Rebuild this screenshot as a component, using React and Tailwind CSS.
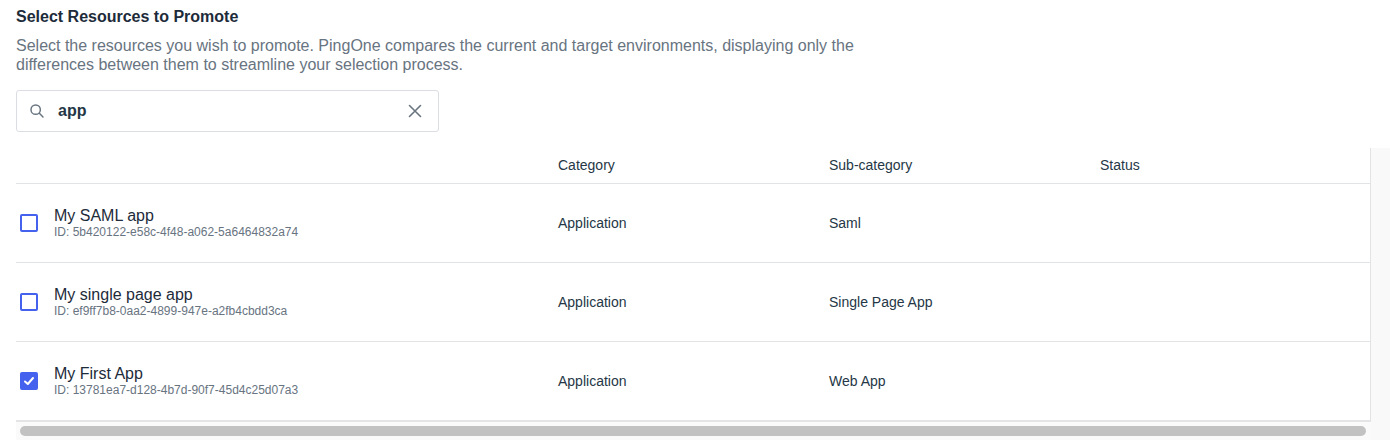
import React from "react";

const rows = [
  { name: "My SAML app", id: "5b420122-e58c-4f48-a062-5a6464832a74", sub: "Saml", checked: false },
  { name: "My single page app", id: "ef9ff7b8-0aa2-4899-947e-a2fb4cbdd3ca", sub: "Single Page App", checked: false },
  { name: "My First App", id: "13781ea7-d128-4b7d-90f7-45d4c25d07a3", sub: "Web App", checked: true },
];

export default function App() {
  return (
    <div className="w-[1390px] h-[442px] bg-white overflow-hidden text-[#253746]" style={{ fontFamily: '"Liberation Sans", Arial, sans-serif' }}>
      <div className="pl-4 pt-[6px]">
        <h2 className="text-[16px] font-bold leading-[22px] text-[#1d2b3a]">Select Resources to Promote</h2>
        <p className="mt-[8px] text-[16px] leading-[19px] text-[#68747f] w-[840px]">
          Select the resources you wish to promote. PingOne compares the current and target environments, displaying only the differences between them to streamline your selection process.
        </p>
        <div className="mt-[16px] w-[423px] h-[42px] border border-[#dadde1] rounded-[3px] flex items-center px-[12px]">
          <svg width="16" height="16" viewBox="0 0 24 24" fill="none" stroke="#68747f" strokeWidth="2.2" strokeLinecap="round"><circle cx="10" cy="10" r="7" /><path d="M15.5 15.5 21 21" /></svg>
          <span className="ml-[13px] text-[16px] font-bold text-[#253746]">app</span>
          <svg className="ml-auto mr-[4px]" width="14" height="14" viewBox="0 0 14 14" stroke="#68747f" strokeWidth="1.6" strokeLinecap="round"><path d="M1.5 1.5 12.5 12.5M12.5 1.5 1.5 12.5" /></svg>
        </div>
      </div>
      <div className="mt-[16px] flex">
        <div className="w-[1371px] pl-4">
          <div className="border-r border-[#e1e3e6]">
            <div className="h-[36px] flex items-center text-[14px] text-[#253746] border-b border-[#e1e3e6]">
              <div className="w-[542px]" />
              <div className="w-[271px]">Category</div>
              <div className="w-[271px]">Sub-category</div>
              <div>Status</div>
            </div>
            {rows.map((r) => (
              <div key={r.id} className="h-[79px] flex items-center border-b border-[#e1e3e6] text-[14px]">
                <div className="w-[542px] flex items-center">
                  <div className={`ml-[4px] w-[18px] h-[18px] rounded-[2px] flex items-center justify-center ${r.checked ? "bg-[#4462ed]" : "border-2 border-[#4462ed]"}`}>
                    {r.checked && (
                      <svg width="12" height="12" viewBox="0 0 12 12" fill="none" stroke="white" strokeWidth="2" strokeLinecap="round" strokeLinejoin="round"><path d="M2 6.5 4.8 9 10 3" /></svg>
                    )}
                  </div>
                  <div className="ml-[16px]">
                    <div className="text-[16px] leading-[18px] text-[#1d2b3a]">{r.name}</div>
                    <div className="text-[12px] leading-[14px] text-[#68747f]">ID: {r.id}</div>
                  </div>
                </div>
                <div className="w-[271px]">Application</div>
                <div className="w-[271px]">{r.sub}</div>
                <div />
              </div>
            ))}
          </div>
          <div className="h-[19px] flex items-center pl-[4px] pr-[5px] bg-[#fafafa] border-t border-[#e5e5e5]">
            <div className="w-full h-[10px] rounded-full bg-[#c2c2c2]" />
          </div>
        </div>
        <div className="flex-1 bg-[#f9f9f9]" />
      </div>
    </div>
  );
}
